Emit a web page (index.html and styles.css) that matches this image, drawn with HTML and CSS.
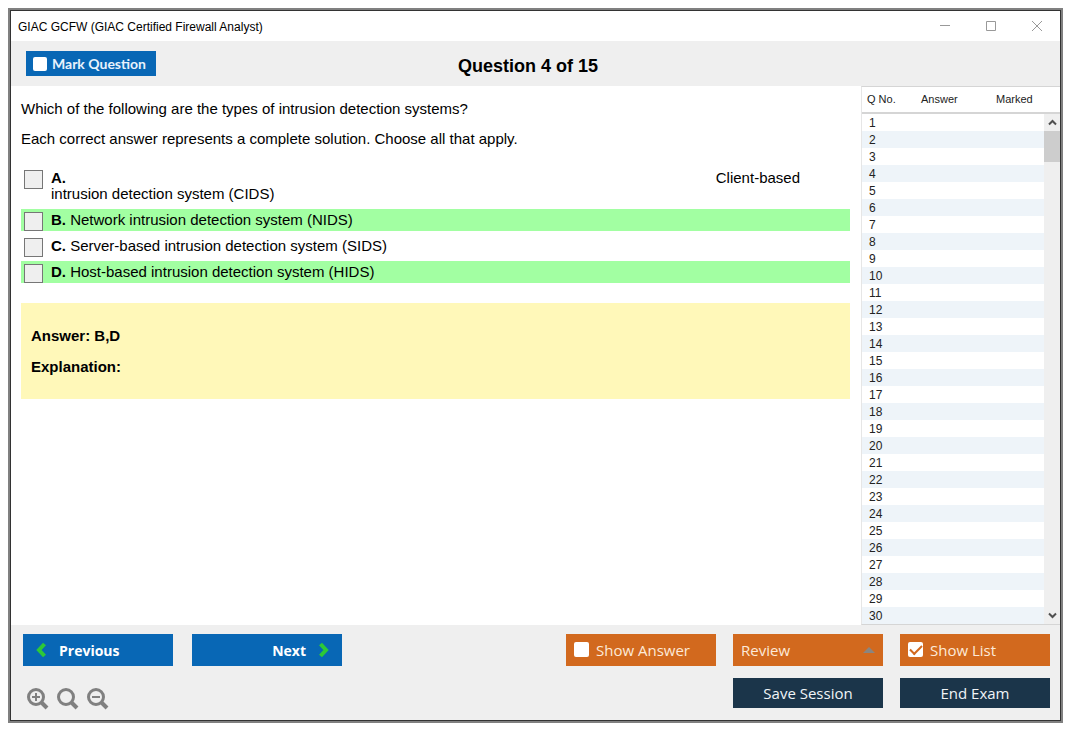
FILE: index.html
```html
<!DOCTYPE html>
<html lang="en">
<head>
<meta charset="utf-8">
<meta name="viewport" content="width=device-width, initial-scale=1">
<title>GIAC GCFW (GIAC Certified Firewall Analyst)</title>
<link rel="stylesheet" href="styles.css">
</head>
<body>
<div class="window">
  <header class="titlebar">
    <span class="caption">GIAC GCFW (GIAC Certified Firewall Analyst)</span>
    <div class="window-controls">
      <button type="button" aria-label="Minimize"><svg width="12" height="12" viewBox="0 0 12 12"><path d="M1 4.500H11"/></svg></button>
      <button type="button" aria-label="Maximize"><svg width="12" height="12" viewBox="0 0 12 12"><path d="M1.500 0.500H10.500V9.500H1.500Z"/></svg></button>
      <button type="button" aria-label="Close"><svg width="12" height="12" viewBox="0 0 12 12"><path d="M1 0L11 10M11 0L1 10"/></svg></button>
    </div>
  </header>
  <div class="heading">
    <label class="mark"><input class="check" type="checkbox">Mark Question</label>
    <h1>Question 4 of 15</h1>
  </div>
  <div class="content">
    <main class="question">
      <p>Which of the following are the types of intrusion detection systems?</p>
      <p>Each correct answer represents a complete solution. Choose all that apply.</p>
      <div class="options">
        <label class="option"><input type="checkbox"><span class="option-text"><span class="split"><b>A.</b><span>Client-based</span></span>intrusion detection system (CIDS)</span></label>
        <label class="option correct"><input type="checkbox"><span class="option-text"><b>B.</b> Network intrusion detection system (NIDS)</span></label>
        <label class="option"><input type="checkbox"><span class="option-text"><b>C.</b> Server-based intrusion detection system (SIDS)</span></label>
        <label class="option correct"><input type="checkbox"><span class="option-text"><b>D.</b> Host-based intrusion detection system (HIDS)</span></label>
      </div>
      <section class="solution">
        <p>Answer: B,D</p>
        <p>Explanation:</p>
      </section>
    </main>
    <aside class="list">
      <div class="list-body">
        <table>
          <thead><tr><th>Q No.</th><th>Answer</th><th>Marked</th></tr></thead>
          <tbody>
            <tr><td>1</td><td></td><td></td></tr>
            <tr><td>2</td><td></td><td></td></tr>
            <tr><td>3</td><td></td><td></td></tr>
            <tr><td>4</td><td></td><td></td></tr>
            <tr><td>5</td><td></td><td></td></tr>
            <tr><td>6</td><td></td><td></td></tr>
            <tr><td>7</td><td></td><td></td></tr>
            <tr><td>8</td><td></td><td></td></tr>
            <tr><td>9</td><td></td><td></td></tr>
            <tr><td>10</td><td></td><td></td></tr>
            <tr><td>11</td><td></td><td></td></tr>
            <tr><td>12</td><td></td><td></td></tr>
            <tr><td>13</td><td></td><td></td></tr>
            <tr><td>14</td><td></td><td></td></tr>
            <tr><td>15</td><td></td><td></td></tr>
            <tr><td>16</td><td></td><td></td></tr>
            <tr><td>17</td><td></td><td></td></tr>
            <tr><td>18</td><td></td><td></td></tr>
            <tr><td>19</td><td></td><td></td></tr>
            <tr><td>20</td><td></td><td></td></tr>
            <tr><td>21</td><td></td><td></td></tr>
            <tr><td>22</td><td></td><td></td></tr>
            <tr><td>23</td><td></td><td></td></tr>
            <tr><td>24</td><td></td><td></td></tr>
            <tr><td>25</td><td></td><td></td></tr>
            <tr><td>26</td><td></td><td></td></tr>
            <tr><td>27</td><td></td><td></td></tr>
            <tr><td>28</td><td></td><td></td></tr>
            <tr><td>29</td><td></td><td></td></tr>
            <tr><td>30</td><td></td><td></td></tr>
          </tbody>
        </table>
      </div>
      <div class="scroll-column">
        <div class="scroll-head"></div>
        <div class="scrollbar">
          <button type="button" aria-label="Scroll up"><svg width="9" height="7" viewBox="0 0 9 7"><path d="M1 5.500L4.500 2L8 5.500"/></svg></button>
          <div class="thumb"></div>
          <button class="down" type="button" aria-label="Scroll down"><svg width="9" height="7" viewBox="0 0 9 7"><path d="M1 1.500L4.500 5L8 1.500"/></svg></button>
        </div>
      </div>
    </aside>
  </div>
  <footer class="footer">
    <div class="left">
      <div class="nav">
        <button class="btn blue" type="button"><svg width="10" height="16" viewBox="0 0 10 16"><path d="M8.500 2L3 8L8.500 14"/></svg>Previous</button>
        <button class="btn blue next" type="button">Next<svg width="10" height="16" viewBox="0 0 10 16"><path d="M1.500 2L7 8L1.500 14"/></svg></button>
      </div>
      <div class="zoom">
        <button type="button" aria-label="Zoom in"><svg width="22" height="22" viewBox="0 0 22 22"><circle cx="9" cy="9" r="7.500"/><path class="handle" d="M14.500 14.500L20 20"/><path class="sign" d="M5 9H13M9 5V13"/></svg></button>
        <button type="button" aria-label="Reset zoom"><svg width="22" height="22" viewBox="0 0 22 22"><circle cx="9" cy="9" r="7.500"/><path class="handle" d="M14.500 14.500L20 20"/></svg></button>
        <button type="button" aria-label="Zoom out"><svg width="22" height="22" viewBox="0 0 22 22"><circle cx="9" cy="9" r="7.500"/><path class="handle" d="M14.500 14.500L20 20"/><path class="sign" d="M5 9H13"/></svg></button>
      </div>
    </div>
    <div class="actions">
      <label class="btn orange"><input class="check" type="checkbox">Show Answer</label>
      <button class="btn orange review" type="button">Review<svg width="12" height="6" viewBox="0 0 12 6"><path d="M0 6L6 0L12 6Z"/></svg></button>
      <label class="btn orange"><input class="check" type="checkbox" checked>Show List</label>
      <button class="btn navy save" type="button">Save Session</button>
      <button class="btn navy" type="button">End Exam</button>
    </div>
  </footer>
</div>
</body>
</html>
```

FILE: styles.css
```css
* {
  box-sizing: border-box;
}

body {
  margin: 0;
  padding: 8px 12px 12px 8px;
  height: 100vh;
  display: flex;
  background: #fff;
  color: #000;
  font-family: "Liberation Sans", Arial, sans-serif;
  font-size: 15px;
}

button {
  border: 0;
  padding: 0;
  background: none;
  font: inherit;
  color: inherit;
}

svg {
  display: block;
  fill: none;
}

p {
  margin: 0;
}

.window {
  flex: 1;
  display: flex;
  flex-direction: column;
  border: 1px solid #333;
  outline: 2px solid #808080;
  margin: 2px;
}

.titlebar {
  flex: none;
  display: flex;
  align-items: center;
  justify-content: space-between;
  height: 30px;
  padding: 1px 17px 0 7px;
  font-size: 12px;
}

.window-controls {
  display: flex;
  gap: 34px;
}

.window-controls svg {
  stroke: #999;
}

.heading {
  flex: none;
  display: grid;
  grid-template-columns: 1fr auto 1fr;
  align-items: center;
  height: 45px;
  padding: 0 30px 0 15px;
  background: #efefef;
}

.heading h1 {
  margin: 0;
  padding-top: 5px;
  font-size: 18px;
}

.mark {
  justify-self: start;
  display: flex;
  align-items: center;
  gap: 5px;
  height: 25px;
  padding: 0 10px 0 7px;
  background: #0867b5;
  color: #e8f2fc;
  font: bold 14px Lato, Carlito, sans-serif;
}

.check {
  appearance: none;
  display: grid;
  place-items: center;
  margin: 0;
  width: 14px;
  height: 14px;
  border-radius: 2px;
  background: #fff;
}

.content {
  flex: 1;
  min-height: 0;
  display: flex;
}

.question {
  flex: 1;
  display: flex;
  flex-direction: column;
  padding: 14px 11px 14px 10px;
  line-height: 18px;
  overflow: auto;
}

.question > p {
  margin-bottom: 12px;
}

.options {
  display: flex;
  flex-direction: column;
  gap: 4px;
  padding: 7px 0 20px;
}

.option {
  display: flex;
  gap: 8px;
  padding: 3px 50px 3px 3px;
  line-height: 16px;
}

.option input {
  appearance: none;
  flex: none;
  width: 19px;
  height: 19px;
  margin: 0 0 -3px;
  border: 1px solid #767676;
  background: #efefef;
}

.option-text {
  flex: 1;
}

.split {
  display: flex;
  justify-content: space-between;
}

.correct {
  background: #a2ffa2;
}

.solution {
  display: flex;
  flex-direction: column;
  gap: 13px;
  padding: 24px 10px 23px;
  background: #fff8b9;
  font-weight: bold;
}

.list {
  display: flex;
  width: 199px;
  border-left: 1px solid #e6e6e6;
  border-top: 1px solid #d5d5d5;
  border-bottom: 1px solid #d5d5d5;
}

.list-body {
  flex: 1;
  overflow: hidden;
}

.list table {
  width: 100%;
  border-collapse: collapse;
  table-layout: fixed;
  font-size: 12px;
  color: #222;
}

.list th {
  height: 26px;
  padding: 0 0 2px 5px;
  border-bottom: 2px solid #d5d5d5;
  font-size: 11px;
  font-weight: normal;
  text-align: left;
}

.list th:first-child {
  width: 54px;
}

.list th:nth-child(2) {
  width: 75px;
}

.list td {
  height: 17px;
  padding: 2px 0 0 7px;
  line-height: 15px;
}

.list tbody tr:nth-child(even) {
  background: #eef4f9;
}

.scroll-column {
  display: flex;
  flex-direction: column;
  width: 16px;
}

.scroll-head {
  height: 27px;
  border-bottom: 2px solid #d5d5d5;
}

.scrollbar {
  flex: 1;
  display: flex;
  flex-direction: column;
  background: #efefef;
}

.scrollbar button {
  display: grid;
  place-items: center;
  height: 17px;
}

.scrollbar svg {
  stroke: #505050;
  stroke-width: 2;
}

.thumb {
  height: 31px;
  background: #cdcdcd;
}

.scrollbar .down {
  margin-top: auto;
}

.footer {
  flex: none;
  display: flex;
  justify-content: space-between;
  padding: 9px 10px 10px 12px;
  background: #efefef;
}

.nav {
  display: flex;
  gap: 19px;
}

.btn {
  display: flex;
  align-items: center;
  width: 150px;
  height: 32px;
  font: 15px "Open Sans", "Noto Sans", sans-serif;
}

.blue {
  gap: 13px;
  padding: 0 13px;
  background: #0867b5;
  color: #fff;
  font-size: 14px;
  font-weight: bold;
}

.blue svg {
  stroke: #2dc937;
  stroke-width: 4;
}

.next {
  justify-content: flex-end;
}

.zoom {
  display: flex;
  gap: 8px;
  padding: 22px 0 0 4px;
}

.zoom svg {
  stroke: #808080;
  stroke-width: 3;
}

.zoom .handle {
  stroke-width: 4;
}

.zoom .sign {
  stroke-width: 2;
}

.actions {
  display: grid;
  grid-template-columns: repeat(3, 150px);
  gap: 12px 17px;
  align-content: start;
}

.orange {
  gap: 7px;
  padding: 0 8px 1px;
  background: #d2691e;
  color: #fde9d9;
}

.orange .check {
  width: 15px;
  height: 15px;
}

.check:checked::before {
  content: "";
  width: 10px;
  height: 5px;
  margin-bottom: 3px;
  border: solid #d2691e;
  border-width: 0 0 2px 2px;
  transform: rotate(-45deg);
}

.review {
  justify-content: space-between;
}

.review path {
  fill: #8a8580;
}

.navy {
  justify-content: center;
  height: 30px;
  background: #1b354a;
  color: #f0f4f7;
}

.save {
  grid-column: 2;
}
```
